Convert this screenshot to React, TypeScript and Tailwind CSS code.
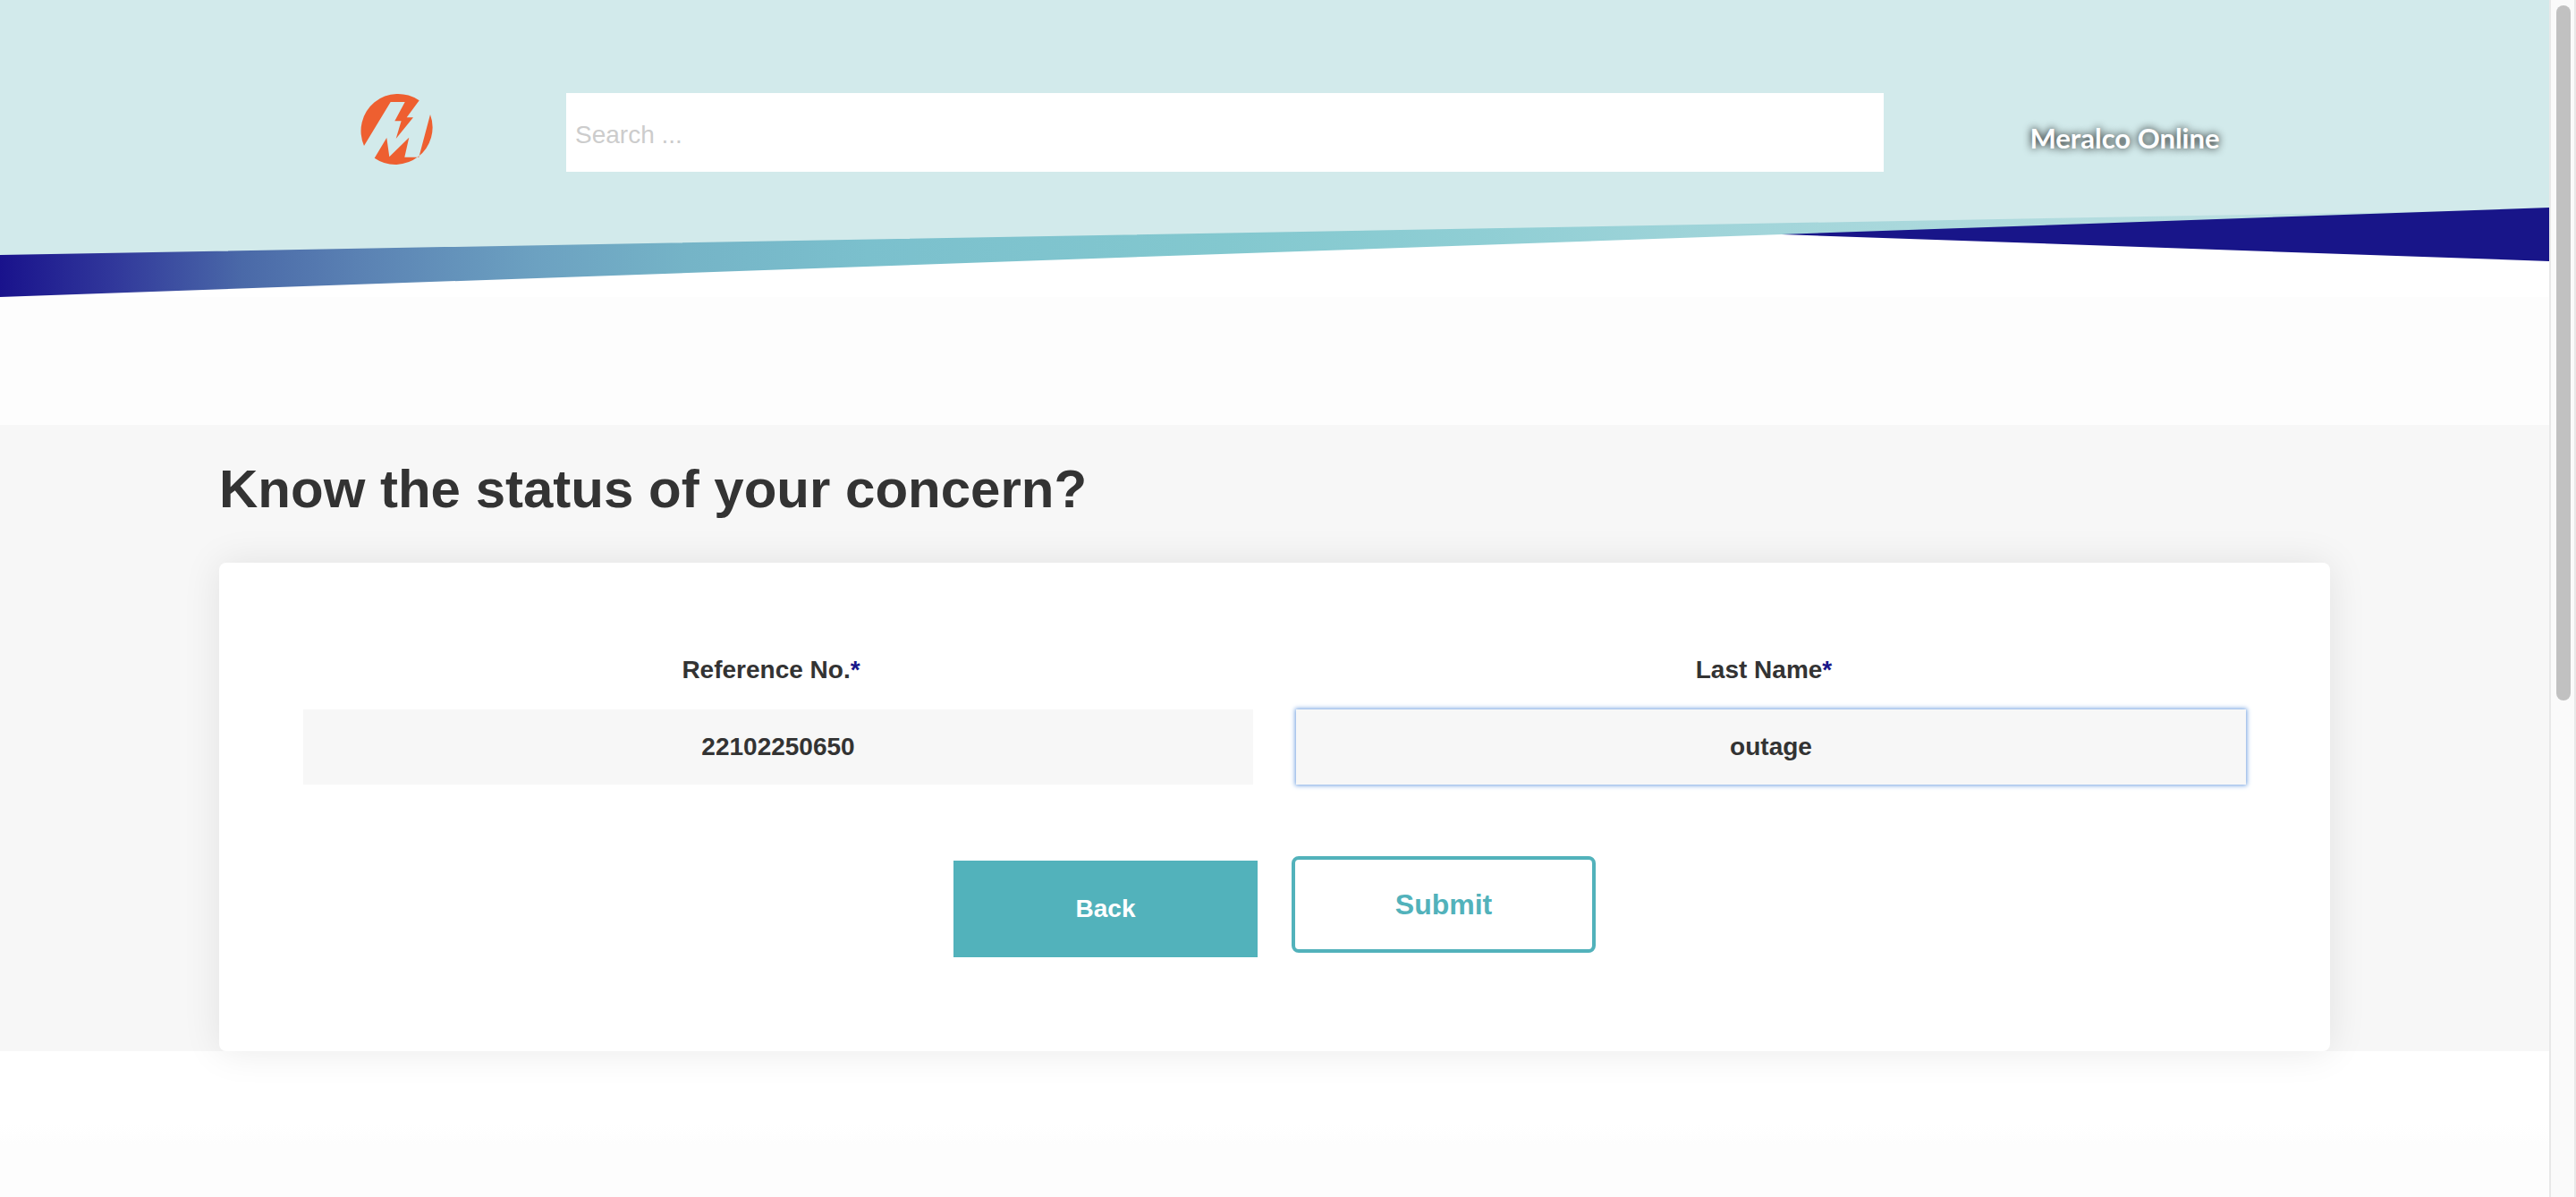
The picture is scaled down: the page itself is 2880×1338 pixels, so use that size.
import React from "react";

function Logo() {
  return (
    <svg viewBox="0 0 84 84" className="h-[84px] w-[84px]" role="img" aria-label="Meralco">
      <path
        fill="#ee5f30"
        d="M67.7 10.3 A41.5 41.5 0 0 0 6 61 L35.7 12 H51.7 L40.3 33.3 H47.6 L41.7 53 L61 29.3 H53.7 Z"
      />
      <path
        fill="#ee5f30"
        d="M80 26 A41.5 41.5 0 0 1 17.7 74.7 L31.3 52 L34.3 73.3 L56.3 51.7 L51.3 73.7 H67.3 Z"
      />
    </svg>
  );
}

function HeaderBackdrop() {
  return (
    <svg
      viewBox="0 0 2850 332"
      preserveAspectRatio="none"
      className="absolute inset-0 h-full w-full"
      aria-hidden="true"
    >
      <defs>
        <linearGradient id="ribbon" x1="0" y1="0" x2="2850" y2="0" gradientUnits="userSpaceOnUse">
          <stop offset="0" stopColor="#19128c" />
          <stop offset="0.045" stopColor="#31389b" />
          <stop offset="0.095" stopColor="#4a69a8" />
          <stop offset="0.14" stopColor="#5a81b3" />
          <stop offset="0.21" stopColor="#6ca1c1" />
          <stop offset="0.27" stopColor="#75b4c7" />
          <stop offset="0.34" stopColor="#7bc0cd" />
          <stop offset="0.48" stopColor="#83c8cf" />
          <stop offset="0.58" stopColor="#8fced4" />
          <stop offset="0.67" stopColor="#9fd4d9" />
          <stop offset="0.88" stopColor="#bbdfe1" />
          <stop offset="1" stopColor="#cbe7e8" />
        </linearGradient>
      </defs>
      <polygon points="0,0 2850,0 2850,240 0,290" fill="#d2eaeb" />
      <polygon points="0,285 2850,234 2850,262 1992,262 0,332" fill="url(#ribbon)" />
      <polygon points="1992,262 2850,232 2850,292" fill="#181589" />
    </svg>
  );
}

function Field({ id, label, value }: { id: string; label: string; value: string }) {
  return (
    <div className="flex flex-col">
      <label
        htmlFor={id}
        className="mb-6 pt-px pr-4 text-center text-[28px] leading-10 font-bold"
      >
        {label}
        <span className="text-[#181589]">*</span>
      </label>
      <input
        id={id}
        type="text"
        defaultValue={value}
        autoFocus={id === "last-name"}
        className="h-[84px] w-full bg-[#f7f7f7] text-center text-[28px] font-bold caret-transparent outline-none focus:shadow-[0_0_5px_1px_#6f9fe0]"
      />
    </div>
  );
}

function Scrollbar() {
  return (
    <div
      className="sticky top-0 h-screen w-[30px] shrink-0 border-x-2 border-[#e8e8e8] bg-[#fafafa] px-1.5 py-1.5"
      aria-hidden="true"
    >
      <div className="h-[58.6%] w-4 rounded-full bg-[#c1c1c1]" />
    </div>
  );
}

export default function App() {
  return (
    <div className="flex min-h-screen bg-[#fdfdfd] font-['Liberation_Sans',Arial,sans-serif] text-[#333333]">
      <div className="flex min-w-0 flex-1 flex-col">
        <header className="relative h-[332px] bg-white">
          <HeaderBackdrop />
          <div className="relative mx-auto grid max-w-[2360px] grid-cols-[388px_1fr_499px] items-start pt-[102px]">
            <a href="#" className="justify-self-center pl-2">
              <Logo />
            </a>
            <input
              type="search"
              aria-label="Search"
              placeholder="Search ..."
              className="mt-0.5 h-[88px] w-full bg-white px-2.5 pt-1.5 text-[28px] outline-none placeholder:text-[#cccccc]"
            />
            <a
              href="#"
              className="justify-self-center pt-8 pl-10 font-['Lato',sans-serif] text-[31px] leading-10 font-bold whitespace-nowrap text-white [text-shadow:0_0_10px_#000]"
            >
              Meralco Online
            </a>
          </div>
        </header>

        <main className="relative mt-[143px] bg-[#f7f7f7]">
          <div className="mx-auto max-w-[2360px] pt-9">
            <h1 className="mb-[46px] text-[60px] leading-[72px] font-bold">
              Know the status of your concern?
            </h1>
            <form
              onSubmit={(e) => e.preventDefault()}
              className="rounded-lg bg-white px-[94px] pt-[99px] pb-[105px] shadow-[0_0_44px_rgba(0,0,0,0.09)]"
            >
              <div className="grid grid-cols-2 gap-12">
                <Field id="reference-no" label="Reference No." value="22102250650" />
                <Field id="last-name" label="Last Name" value="outage" />
              </div>
              <div className="mt-20 flex items-start justify-center gap-[38px]">
                <button
                  type="button"
                  className="mt-[5px] h-[108px] w-[340px] bg-[#52b2bb] text-[28px] font-bold text-white"
                >
                  Back
                </button>
                <button
                  type="submit"
                  className="h-[108px] w-[340px] rounded-lg border-4 border-[#52b2bb] bg-white text-[32px] font-bold text-[#52b2bb]"
                >
                  Submit
                </button>
              </div>
            </form>
          </div>
        </main>

        <div className="flex-1 bg-linear-to-b from-white from-50% to-[#fdfdfd] to-65%" />
      </div>
      <Scrollbar />
    </div>
  );
}
